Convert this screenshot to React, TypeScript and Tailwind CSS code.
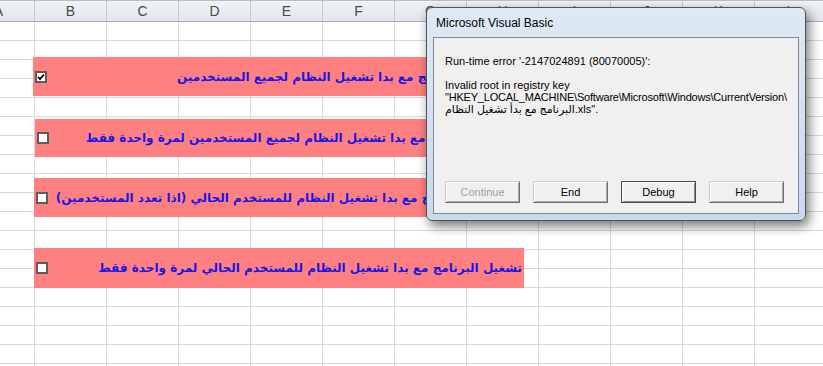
const COLS = ["A", "B", "C", "D", "E", "F", "G", "H", "I", "J", "K", "L"];
const ROWS = Array.from({ length: 19 }, (_, i) => i);

const BANDS = [
  { pos: "left-[33px] top-[57px] w-[476px] h-[39px]", checked: true, text: "تشغيل البرنامج مع بدا تشغيل النظام لجميع المستخدمين" },
  { pos: "left-[35px] top-[119px] w-[486px] h-[38px]", checked: false, text: "تشغيل البرنامج مع بدا تشغيل النظام لجميع المستخدمين لمرة واحدة فقط" },
  { pos: "left-[34px] top-[178px] w-[479px] h-[39px]", checked: false, text: "تشغيل البرنامج مع بدا تشغيل النظام للمستخدم الحالي (اذا تعدد المستخدمين)" },
  { pos: "left-[34px] top-[248px] w-[490px] h-[40px]", checked: false, text: "تشغيل البرنامج مع بدا تشغيل النظام للمستخدم الحالي لمرة واحدة فقط" },
];

function CheckBox({ checked }: { checked: boolean }) {
  return (
    <div className="w-[12px] h-[12px] shrink-0 border-2 border-[#5c5c5c] bg-white flex items-center justify-center">
      {checked && (
        <svg width="8" height="8" viewBox="0 0 8 8">
          <path d="M1 4 L3 6.2 L7 1.5" stroke="#000" strokeWidth="1.8" fill="none" />
        </svg>
      )}
    </div>
  );
}

function Band({ pos, checked, text }: { pos: string; checked: boolean; text: string }) {
  return (
    <div className={`absolute ${pos} bg-[#ff8080] flex items-center justify-between pl-[2px] pr-[2px]`}>
      <CheckBox checked={checked} />
      <div
        dir="rtl"
        className="whitespace-nowrap font-['DejaVu_Sans',sans-serif] font-bold text-[12px] text-[#1717e8]"
      >
        {text}
      </div>
    </div>
  );
}

function VbButton({ label, disabled, isDefault }: { label: string; disabled?: boolean; isDefault?: boolean }) {
  return (
    <div
      className={`w-[75px] h-[22px] flex items-center justify-center bg-[#f0f0f0] text-[11px] border ${
        isDefault
          ? "border-[#4a4a4a] shadow-[inset_1px_1px_0_#fff,inset_-1px_-1px_0_#8a8a8a]"
          : "border-t-[#c8c8c8] border-l-[#c8c8c8] border-b-[#6e6e6e] border-r-[#6e6e6e] shadow-[inset_1px_1px_0_#fff,inset_-1px_-1px_0_#a8a8a8]"
      } ${disabled ? "text-[#a0a0a0]" : "text-black"}`}
    >
      {label}
    </div>
  );
}

function ErrorDialog() {
  return (
    <div className="absolute left-[426px] top-[7px] w-[380px] h-[214px] rounded-[6px] border border-[#4b5560] bg-[linear-gradient(to_bottom,#dfe9f5,#c9d9ec)] shadow-[3px_5px_12px_rgba(0,0,0,0.55)] flex flex-col px-[6px] pb-[6px]">
      <div className="h-[29px] flex items-center pl-[3px] font-['Liberation_Sans',sans-serif] text-[12px] text-black">
        Microsoft Visual Basic
      </div>
      <div className="flex-1 border border-[#7d8a98] bg-[#f0f0f0] flex flex-col font-['Liberation_Sans','DejaVu_Sans',sans-serif] text-[11px] text-black">
        <div className="pt-[17px] pl-[11px] leading-[12px] whitespace-pre">
          <div>Run-time error '-2147024891 (80070005)':</div>
          <div className="h-[12px]" />
          <div>Invalid root in registry key</div>
          <div className="tracking-[-0.2px]">"HKEY_LOCAL_MACHINE\Software\Microsoft\Windows\CurrentVersion\</div>
          <div>البرنامج مع بدأ تشغيل النظام.xls".</div>
        </div>
        <div className="mt-auto mb-[10px] pl-[11px] flex gap-[13px]">
          <VbButton label="Continue" disabled />
          <VbButton label="End" />
          <VbButton label="Debug" isDefault />
          <VbButton label="Help" />
        </div>
      </div>
    </div>
  );
}

export default function App() {
  return (
    <div className="relative w-[823px] h-[366px] overflow-hidden bg-white">
      <div className="flex h-[22px] border-b border-[#a3afbd] bg-[linear-gradient(to_bottom,#f1f3f6,#e2e6eb)] border-t border-t-[#b9bfc6]">
        {COLS.map((c, i) => (
          <div
            key={c}
            className={`w-[72px] shrink-0 border-r border-[#c3c9d1] flex items-center justify-center font-['Liberation_Sans',sans-serif] text-[14px] text-[#4a4a4a] ${
              i === 0 ? "ml-[-37px]" : ""
            }`}
          >
            {c}
          </div>
        ))}
      </div>
      {ROWS.map((r) => (
        <div key={r} className="flex h-[19px] border-b border-[#dadada]">
          {COLS.map((c, i) => (
            <div key={c} className={`w-[72px] shrink-0 border-r border-[#dadada] ${i === 0 ? "ml-[-37px]" : ""}`} />
          ))}
        </div>
      ))}
      {BANDS.map((b) => (
        <Band key={b.pos} {...b} />
      ))}
      <ErrorDialog />
    </div>
  );
}
